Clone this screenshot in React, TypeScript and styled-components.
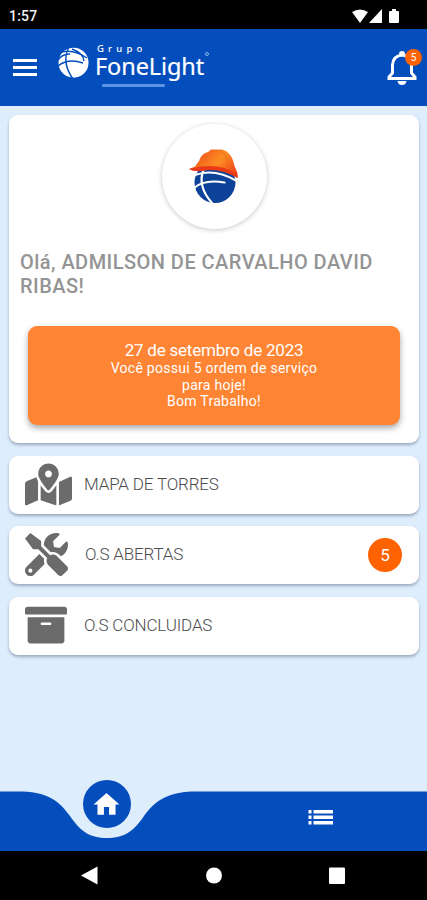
import React from 'react';
import styled, { createGlobalStyle } from 'styled-components';
import { FaArchive, FaMapMarkedAlt, FaTools } from 'react-icons/fa';
import { MdHome } from 'react-icons/md';

const blue = '#044dbc';
const pale = '#deedfc';
const orange = '#ff6200';

const GlobalStyle = createGlobalStyle`
  * { box-sizing: border-box; }
  body { margin: 0; font-family: Roboto, "Liberation Sans", sans-serif; }
`;

const Screen = styled.div`
  width: 427px;
  height: 900px;
  display: flex;
  flex-direction: column;
  background: ${pale};
  overflow: hidden;
`;

const StatusBar = styled.div`
  flex: none;
  height: 29px;
  background: #000;
  display: flex;
  align-items: center;
  justify-content: space-between;
  padding: 3px 26px 0 9px;
  color: #f2f2f2;
  font-size: 14px;
  font-weight: 500;
  line-height: 16px;
  letter-spacing: 0.2px;
`;

const Header = styled.header`
  flex: none;
  height: 77px;
  background: ${blue};
  display: flex;
  align-items: center;
  padding: 0 5px 0 13px;
`;

const MenuIcon = styled.div`
  width: 24px;
  height: 17px;
  display: flex;
  flex-direction: column;
  justify-content: space-between;
  margin-right: 20px;
`;

const MenuLine = styled.span`
  height: 3px;
  background: #fff;
`;

const Brand = styled.div`
  display: flex;
  height: 50px;
  color: #fff;
  font-family: "Noto Sans", "Open Sans", sans-serif;
`;

const BrandWords = styled.div`
  display: flex;
  flex-direction: column;
  padding-left: 5px;
`;

const BrandGroup = styled.span`
  height: 11px;
  padding-left: 2px;
  font-size: 9.5px;
  font-weight: 500;
  line-height: 11px;
  letter-spacing: 4.2px;
`;

const BrandName = styled.span`
  display: flex;
  height: 28px;
  font-size: 23.5px;
  line-height: 25px;
  letter-spacing: -0.1px;
  -webkit-text-stroke: 0.2px #fff;
`;

const BrandMark = styled.i`
  width: 4px;
  height: 4px;
  margin: -2px 0 0 1px;
  border: 1px solid #8eb5ec;
  border-radius: 50%;
`;

const BrandRule = styled.span`
  width: 63px;
  height: 3px;
  margin: 2px 0 0 7px;
  border-radius: 2px;
  background: #5f94e4;
`;

const BellButton = styled.div`
  position: relative;
  width: 36px;
  height: 38px;
  margin-left: auto;
`;

const BellBadge = styled.span`
  position: absolute;
  top: 0;
  right: 0;
  width: 17px;
  height: 17px;
  border-radius: 50%;
  background: ${orange};
  color: #fff;
  font-size: 10px;
  line-height: 17px;
  text-align: center;
`;

const Main = styled.main`
  flex: 1;
  padding: 9px 8px 0 9px;
`;

const Panel = styled.section`
  background: #fff;
  border-radius: 9px;
  box-shadow: 0 2px 3px rgba(60, 80, 110, 0.42);
`;

const WelcomeCard = styled(Panel)`
  height: 328px;
  padding: 9px 19px 0;
  margin-bottom: 13px;
`;

const Avatar = styled.div`
  width: 105px;
  height: 105px;
  margin: 0 auto;
  border-radius: 50%;
  background: #fff;
  box-shadow: 0 1px 5px rgba(0, 0, 0, 0.22);
`;

const Greeting = styled.h1`
  margin: 21px -8px 0;
  color: #949494;
  font-size: 20px;
  line-height: 24px;
  font-weight: 500;
  letter-spacing: 0.46px;
`;

const Notice = styled.div`
  height: 99px;
  margin-top: 28px;
  padding: 14px 0 0;
  border-radius: 9px;
  background: #ff8534;
  box-shadow: 0 3px 6px rgba(0, 0, 0, 0.35);
  color: #fff;
  text-align: center;
`;

const NoticeDate = styled.p`
  margin: 0;
  font-size: 17px;
  line-height: 20px;
  letter-spacing: -0.22px;
`;

const NoticeText = styled.p`
  margin: 0;
  font-size: 14px;
  line-height: 16.5px;
  letter-spacing: 0.27px;
`;

const MenuList = styled.nav`
  display: grid;
  gap: 12.4px;
`;

const MenuItem = styled(Panel)`
  height: 58px;
  display: flex;
  align-items: center;
  padding: 0 17px 1px 16px;
  color: #6b6b6b;
`;

const ItemIcon = styled.span<{ $size: number }>`
  width: 48px;
  display: flex;
  font-size: ${(p) => p.$size}px;
`;

const ItemLabel = styled.span<{ $inset: number }>`
  padding: 0 0 1px ${(p) => p.$inset}px;
  font-size: 17px;
  font-weight: 300;
  letter-spacing: -0.16px;
  color: #4c4c4c;
`;

const CountBadge = styled.span`
  width: 34px;
  height: 34px;
  margin-left: auto;
  border-radius: 50%;
  background: ${orange};
  color: #fff;
  font-size: 17px;
  line-height: 34px;
  text-align: center;
`;

const TabBar = styled.nav`
  position: relative;
  flex: none;
  height: 60px;
  display: grid;
  grid-template-columns: 1fr 1fr;
  justify-items: center;
`;

const TabShape = styled.svg`
  position: absolute;
  inset: 0;
`;

const HomeTab = styled.div`
  position: relative;
  width: 48px;
  height: 48px;
  margin-top: -11px;
  border-radius: 50%;
  background: ${blue};
  color: #fff;
  display: grid;
  place-items: center;
  font-size: 31px;
`;

const ListTab = styled.div`
  position: relative;
  display: flex;
  margin-top: 19px;
  height: 15px;
`;

const SystemBar = styled.div`
  flex: none;
  height: 49px;
  background: #000;
  display: flex;
  justify-content: center;
`;

function HelmetGlobe() {
  return (
    <svg width="105" height="105" viewBox="0 0 105 105">
      <defs>
        <linearGradient id="helmet" x1="0" x2="1" y1="0.3" y2="0.8">
          <stop offset="0" stopColor="#f0501c" />
          <stop offset="0.55" stopColor="#fb8d22" />
          <stop offset="1" stopColor="#ee3d18" />
        </linearGradient>
      </defs>
      <circle cx="53" cy="58.500" r="20.500" fill="#0d4299" />
      <path d="M33 51Q52 44 74 56.500M32 64Q42 55 62.500 58.500M41.500 46Q35 62 50 79" fill="none" stroke="#fff" strokeWidth="2.2" strokeLinecap="round" />
      <path d="M27 45L33 42.500L37 37Q39 30 46 28L49 25.500H60L64 27Q71 32 72.500 42L75.500 49V54Q62 45 46 45.500Q34 48 27 45Z" fill="url(#helmet)" />
      <path d="M27 45Q57 37 75.500 51V54Q62 45.500 46 46Q33 49 27 45Z" fill="#e93a18" />
      <path d="M49 28Q45 32 43 38M60 27Q65 33 66 40" fill="none" stroke="#e96a1a" strokeWidth="0.8" />
    </svg>
  );
}

export default function App() {
  return (
    <Screen>
      <GlobalStyle />
      <StatusBar>
        <span>1:57</span>
        <svg width="49" height="15" viewBox="0 0 49 15" fill="#fff">
          <path d="M0 3Q8-2 16 3L8 14Z" />
          <path d="M30 0V14H17Z" />
          <path d="M38 2H40V0H44V2H46Q47 2 47 3V13Q47 14 46 14H38Q37 14 37 13V3Q37 2 38 2Z" />
        </svg>
      </StatusBar>
      <Header>
        <MenuIcon>
          <MenuLine />
          <MenuLine />
          <MenuLine />
        </MenuIcon>
        <Brand>
          <svg width="33" height="38" viewBox="57 43 33 38">
            <circle cx="73.500" cy="62.700" r="15" fill="#fff" />
            <path d="M62 52Q74 49 87 58M58 60Q62 54 70 54M58 66Q68 58 83 63M69 47Q61 62 73 79M72 49Q83 53 84 61" fill="none" stroke={blue} strokeWidth="1.4" />
          </svg>
          <BrandWords>
            <BrandGroup>Grupo</BrandGroup>
            <BrandName>
              FoneLight
              <BrandMark />
            </BrandName>
            <BrandRule />
          </BrandWords>
        </Brand>
        <BellButton>
          <svg width="36" height="38" viewBox="0 0 36 38">
            <path d="M3 29.500V28L6.500 24V16Q7 7 16 6Q25 7 25.500 16V24L29 28V29.500Z" fill="none" stroke="#fff" strokeWidth="3" />
            <path d="M13 5Q13 2 16 2Q19 2 19 5ZM11.500 32H20.500Q20 36 16 36Q12 36 11.500 32Z" fill="#fff" />
          </svg>
          <BellBadge>5</BellBadge>
        </BellButton>
      </Header>
      <Main>
        <WelcomeCard>
          <Avatar>
            <HelmetGlobe />
          </Avatar>
          <Greeting>Olá, ADMILSON DE CARVALHO DAVID RIBAS!</Greeting>
          <Notice>
            <NoticeDate>27 de setembro de 2023</NoticeDate>
            <NoticeText>
              Você possui 5 ordem de serviço
              <br />
              para hoje!
              <br />
              Bom Trabalho!
            </NoticeText>
          </Notice>
        </WelcomeCard>
        <MenuList>
          <MenuItem>
            <ItemIcon $size={47}>
              <FaMapMarkedAlt />
            </ItemIcon>
            <ItemLabel $inset={11}>MAPA DE TORRES</ItemLabel>
          </MenuItem>
          <MenuItem>
            <ItemIcon $size={43}>
              <FaTools />
            </ItemIcon>
            <ItemLabel $inset={12}>O.S ABERTAS</ItemLabel>
            <CountBadge>5</CountBadge>
          </MenuItem>
          <MenuItem>
            <ItemIcon $size={42}>
              <FaArchive />
            </ItemIcon>
            <ItemLabel $inset={11}>O.S CONCLUIDAS</ItemLabel>
          </MenuItem>
        </MenuList>
      </Main>
      <TabBar>
        <TabShape width="427" height="60" viewBox="0 0 427 60">
          <path d="M0 0.500H23C49 2 59 10 70 25C81 41 90 47 107 47C124 47 133 41 144 25C155 10 166 2 192 0.500H427V60H0Z" fill={blue} />
        </TabShape>
        <HomeTab>
          <MdHome />
        </HomeTab>
        <ListTab>
          <svg width="25" height="15" viewBox="0 0 25 15" fill="#fff">
            <path d="M0.500 0H3.500V3.500H0.500ZM5.500 0H25V3.500H5.500ZM0.500 5.500H3.500V9H0.500ZM5.500 5.500H25V9H5.500ZM0.500 11H3.500V14.500H0.500ZM5.500 11H25V14.500H5.500Z" />
          </svg>
        </ListTab>
      </TabBar>
      <SystemBar>
        <svg width="427" height="49" viewBox="0 0 427 49" fill="#fff">
          <path d="M81 24.500L97.500 15.500V33.500Z" />
          <circle cx="214" cy="24.500" r="8" />
          <rect x="329" y="16.500" width="16" height="16.500" rx="1" />
        </svg>
      </SystemBar>
    </Screen>
  );
}
